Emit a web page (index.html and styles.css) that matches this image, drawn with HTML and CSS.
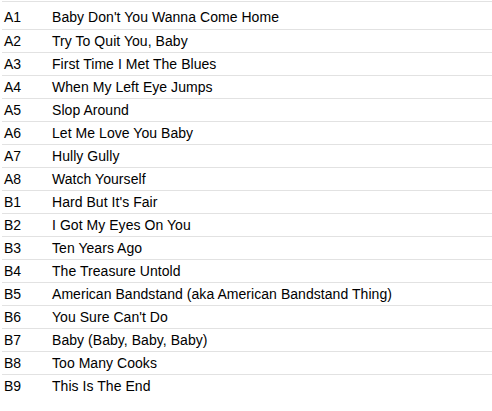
FILE: index.html
```html
<!DOCTYPE html>
<html>
<head>
<meta charset="utf-8">
<link rel="stylesheet" href="styles.css">
</head>
<body>
<div class="tracklist">
  <div class="track first"><span class="pos">A1</span><span class="title">Baby Don't You Wanna Come Home</span></div>
  <div class="track"><span class="pos">A2</span><span class="title">Try To Quit You, Baby</span></div>
  <div class="track"><span class="pos">A3</span><span class="title">First Time I Met The Blues</span></div>
  <div class="track"><span class="pos">A4</span><span class="title">When My Left Eye Jumps</span></div>
  <div class="track"><span class="pos">A5</span><span class="title">Slop Around</span></div>
  <div class="track"><span class="pos">A6</span><span class="title">Let Me Love You Baby</span></div>
  <div class="track"><span class="pos">A7</span><span class="title">Hully Gully</span></div>
  <div class="track"><span class="pos">A8</span><span class="title">Watch Yourself</span></div>
  <div class="track"><span class="pos">B1</span><span class="title">Hard But It's Fair</span></div>
  <div class="track"><span class="pos">B2</span><span class="title">I Got My Eyes On You</span></div>
  <div class="track"><span class="pos">B3</span><span class="title">Ten Years Ago</span></div>
  <div class="track"><span class="pos">B4</span><span class="title">The Treasure Untold</span></div>
  <div class="track"><span class="pos">B5</span><span class="title">American Bandstand (aka American Bandstand Thing)</span></div>
  <div class="track"><span class="pos">B6</span><span class="title">You Sure Can't Do</span></div>
  <div class="track"><span class="pos">B7</span><span class="title">Baby (Baby, Baby, Baby)</span></div>
  <div class="track"><span class="pos">B8</span><span class="title">Too Many Cooks</span></div>
  <div class="track"><span class="pos">B9</span><span class="title">This Is The End</span></div>
</div>
</body>
</html>
```
FILE: styles.css
```css
html, body {
  margin: 0;
  padding: 0;
  background: #fff;
}
body {
  font-family: "Liberation Sans", Arial, sans-serif;
  font-size: 14px;
  color: #000;
}
.tracklist {
  margin: 1px 0 0 2px;
}
.track {
  display: grid;
  grid-template-columns: 50px 1fr;
  border-top: 1px solid #e2e2e2;
  line-height: 22px;
  white-space: nowrap;
}
.track.first {
  padding: 4px 0 1px;
}
.pos {
  padding-left: 2px;
}
.title {
  letter-spacing: 0.05px;
}
```
